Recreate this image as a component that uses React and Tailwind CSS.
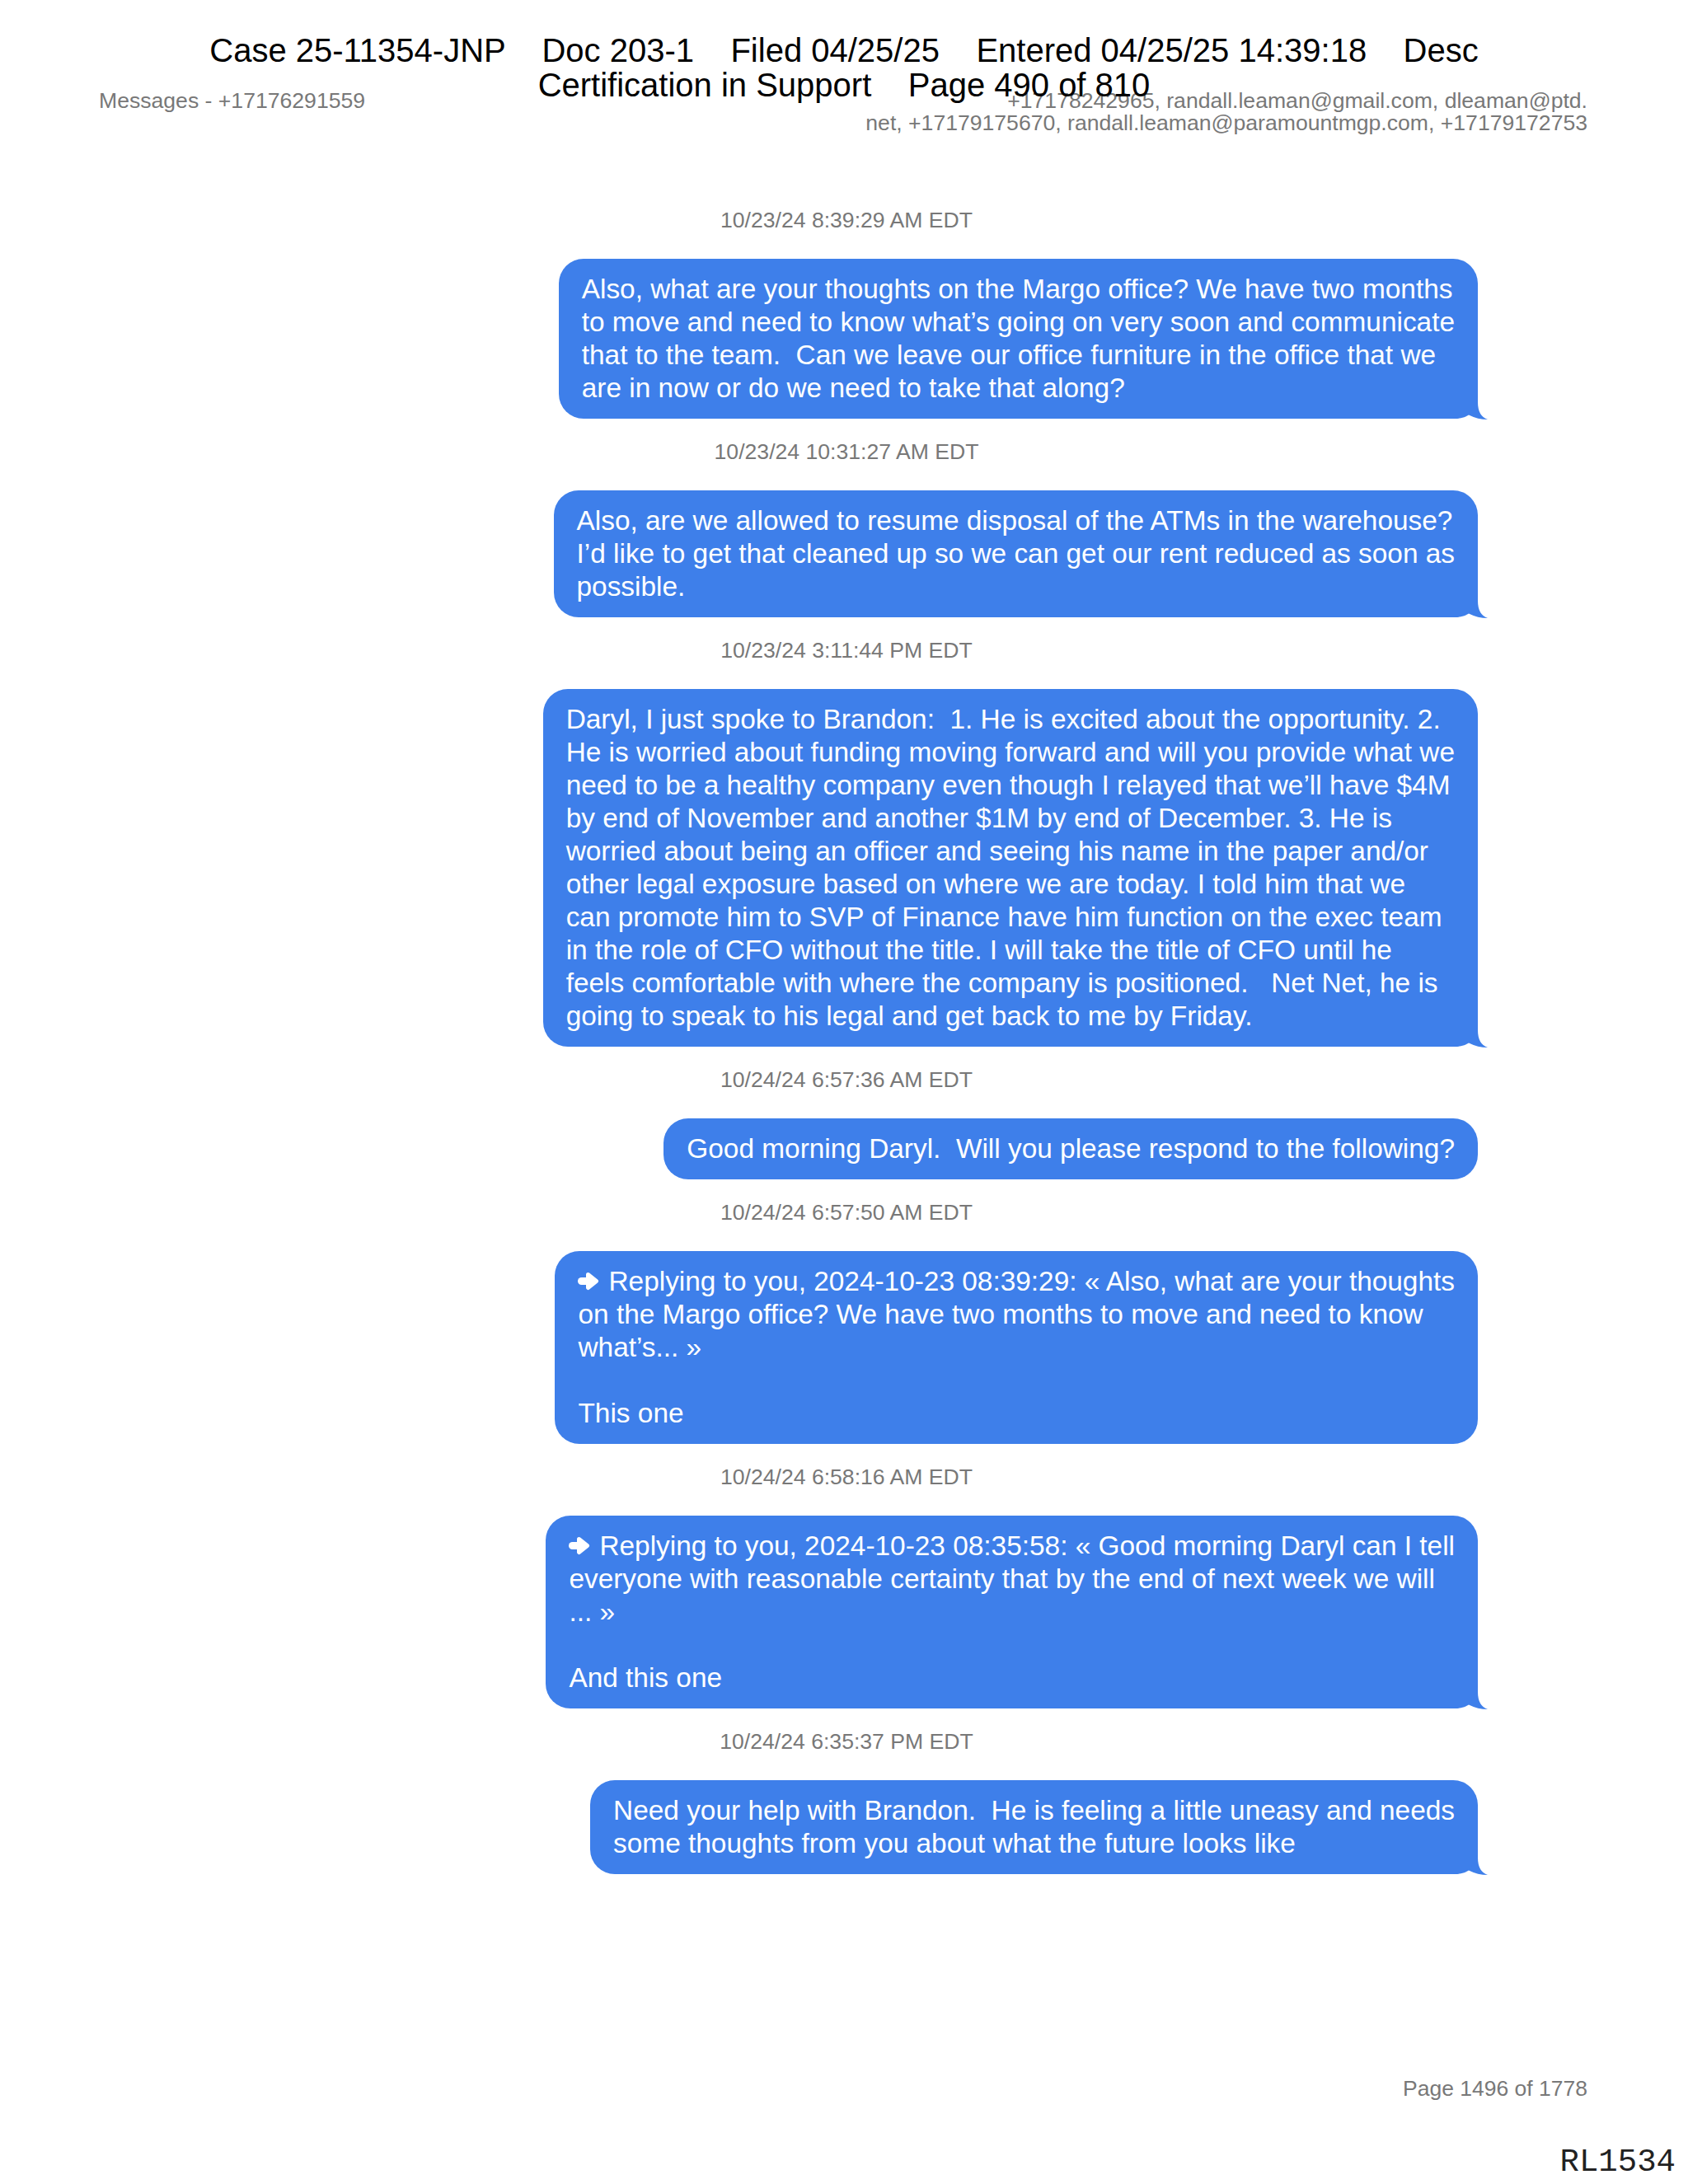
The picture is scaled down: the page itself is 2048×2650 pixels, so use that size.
import React from "react";

const F = { fontFamily: '"Liberation Sans", Arial, sans-serif' };

function Arrow() {
  return (
    <svg width="26" height="23" viewBox="0 0 26 23" className="inline-block align-baseline mr-[11px]">
      <path d="M4.5 11.5 H14" stroke="white" strokeWidth="9" strokeLinecap="round" fill="none" />
      <path d="M12.5 3.5 L22.5 11.5 L12.5 19.5 Z" fill="white" stroke="white" strokeWidth="5" strokeLinejoin="round" />
    </svg>
  );
}

function Tail() {
  return (
    <svg
      width="42"
      height="41"
      viewBox="0 0 42 41"
      className="absolute right-[-12px] bottom-[-1px]"
    >
      <path d="M0 0 H30 V20 Q30 37 42 41 Q30 41 19 35.5 Q12 40 0 40 Z" fill="#3e7fea" />
    </svg>
  );
}

const msgs = [
  {
    ts: "10/23/24 8:39:29 AM EDT",
    tail: true,
    lines: [
      "Also, what are your thoughts on the Margo office? We have two months",
      "to move and need to know what\u2019s going on very soon and communicate",
      "that to the team.  Can we leave our office furniture in the office that we",
      "are in now or do we need to take that along?",
    ],
  },
  {
    ts: "10/23/24 10:31:27 AM EDT",
    tail: true,
    lines: [
      "Also, are we allowed to resume disposal of the ATMs in the warehouse?",
      "I\u2019d like to get that cleaned up so we can get our rent reduced as soon as",
      "possible.",
    ],
  },
  {
    ts: "10/23/24 3:11:44 PM EDT",
    tail: true,
    lines: [
      "Daryl, I just spoke to Brandon:  1. He is excited about the opportunity. 2.",
      "He is worried about funding moving forward and will you provide what we",
      "need to be a healthy company even though I relayed that we\u2019ll have $4M",
      "by end of November and another $1M by end of December. 3. He is",
      "worried about being an officer and seeing his name in the paper and/or",
      "other legal exposure based on where we are today. I told him that we",
      "can promote him to SVP of Finance have him function on the exec team",
      "in the role of CFO without the title. I will take the title of CFO until he",
      "feels comfortable with where the company is positioned.   Net Net, he is",
      "going to speak to his legal and get back to me by Friday.",
    ],
  },
  {
    ts: "10/24/24 6:57:36 AM EDT",
    tail: false,
    lines: ["Good morning Daryl.  Will you please respond to the following?"],
  },
  {
    ts: "10/24/24 6:57:50 AM EDT",
    tail: false,
    reply: true,
    lines: [
      "Replying to you, 2024-10-23 08:39:29: \u00ab Also, what are your thoughts",
      "on the Margo office? We have two months to move and need to know",
      "what\u2019s... \u00bb",
      "",
      "This one",
    ],
  },
  {
    ts: "10/24/24 6:58:16 AM EDT",
    tail: true,
    reply: true,
    lines: [
      "Replying to you, 2024-10-23 08:35:58: \u00ab Good morning Daryl can I tell",
      "everyone with reasonable certainty that by the end of next week we will",
      "... \u00bb",
      "",
      "And this one",
    ],
  },
  {
    ts: "10/24/24 6:35:37 PM EDT",
    tail: true,
    lines: [
      "Need your help with Brandon.  He is feeling a little uneasy and needs",
      "some thoughts from you about what the future looks like",
    ],
  },
];

export default function App() {
  return (
    <div style={F} className="relative w-[2048px] h-[2650px] bg-white flex flex-col overflow-hidden">
      {/* meta row */}
      <div className="flex justify-between items-start pt-[109px] pl-[120px] pr-[122px] text-[26.6px] leading-[27px] text-[#787878]">
        <div>Messages - +17176291559</div>
        <div className="text-right">
          +17178242965, randall.leaman@gmail.com, dleaman@ptd.
          <br />
          net, +17179175670, randall.leaman@paramountmgp.com, +17179172753
        </div>
      </div>

      {/* messages */}
      <div className="flex flex-col pt-[89px]">
        {msgs.map((m, i) => (
          <div key={i} className="flex flex-col">
            <div className={`text-center pl-[6px] text-[26.6px] leading-[30px] text-[#787878] ${i === 0 ? "" : "mt-[25px]"}`}>
              {m.ts}
            </div>
            <div className="flex justify-end pr-[255px] mt-[32px]">
              <div className="relative">
                <div className="relative z-10 bg-[#3e7fea] rounded-[30px] px-[28px] py-[17px] text-white text-[33.4px] leading-[40px] whitespace-pre">
                  {m.lines.map((l, j) => (
                    <div key={j} className="h-[40px]">
                      {m.reply && j === 0 ? <Arrow /> : null}
                      {l}
                    </div>
                  ))}
                </div>
                {m.tail ? <Tail /> : null}
              </div>
            </div>
          </div>
        ))}
      </div>

      <div className="flex-1" />

      {/* footer */}
      <div className="text-right pr-[122px] text-[26.5px] leading-[30px] text-[#787878]">
        Page 1496 of 1778
      </div>
      <div
        className="text-right pr-[15px] mt-[53px] mb-[4px] text-[39px] leading-[44px] text-[#222]"
        style={{ fontFamily: '"Liberation Mono", "Courier New", monospace' }}
      >
        RL1534
      </div>

      {/* court stamp header overlay */}
      <div className="absolute top-[40px] left-0 right-0 text-center text-black text-[40px] leading-[42px] whitespace-pre">
        <div>{"Case 25-11354-JNP    Doc 203-1    Filed 04/25/25    Entered 04/25/25 14:39:18    Desc"}</div>
        <div>{"Certification in Support    Page 490 of 810"}</div>
      </div>
    </div>
  );
}
